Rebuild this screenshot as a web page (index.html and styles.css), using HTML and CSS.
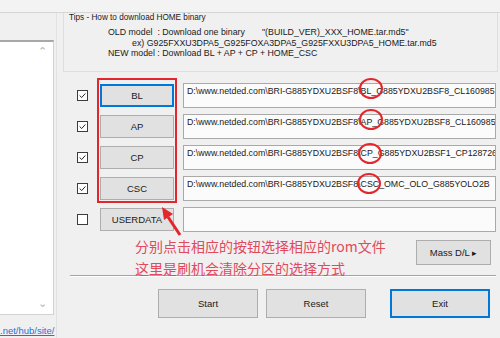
FILE: index.html
```html
<!DOCTYPE html>
<html>
  <head>
    <meta charset="utf-8" />
    <title>Odin</title>
    <link rel="stylesheet" href="styles.css">
  </head>
  <body>
    <div class="window">
      <div class="topstrip"></div>
      <div class="layout">
        <aside class="side">
          <div class="listbox">
            <span class="listbox__arrow">&#8963;</span>
            <span class="listbox__arrow">&#8964;</span>
          </div>
          <a class="side__link">.net/hub/site/</a>
        </aside>

        <main class="main">
          <section class="tips">
            <div class="tips__title">Tips - How to download HOME binary</div>
            <div class="tips__line tips__line--model"><span class="tips__label">OLD model  : Download one binary</span>"(BUILD_VER)_XXX_HOME.tar.md5"</div>
            <div class="tips__line tips__line--ex">ex) G925FXXU3DPA5_G925FOXA3DPA5_G925FXXU3DPA5_HOME.tar.md5</div>
            <div class="tips__line tips__line--model">NEW model : Download BL + AP + CP + HOME_CSC</div>
          </section>

          <div class="files">
            <div class="file-row">
              <span class="check check--on"><svg viewBox="0 0 11 11"><polyline points="2,5.5 4.5,8 9,3" /></svg></span>
              <button class="btn btn--file btn--focus">BL</button>
              <div class="field">D:\www.netded.com\BRI-G885YDXU2BSF8\BL_G885YDXU2BSF8_CL160985</div>
            </div>
            <div class="file-row">
              <span class="check check--on"><svg viewBox="0 0 11 11"><polyline points="2,5.5 4.5,8 9,3" /></svg></span>
              <button class="btn btn--file">AP</button>
              <div class="field">D:\www.netded.com\BRI-G885YDXU2BSF8\AP_G885YDXU2BSF8_CL160985</div>
            </div>
            <div class="file-row">
              <span class="check check--on"><svg viewBox="0 0 11 11"><polyline points="2,5.5 4.5,8 9,3" /></svg></span>
              <button class="btn btn--file">CP</button>
              <div class="field">D:\www.netded.com\BRI-G885YDXU2BSF8\CP_G885YDXU2BSF1_CP128726</div>
            </div>
            <div class="file-row">
              <span class="check check--on"><svg viewBox="0 0 11 11"><polyline points="2,5.5 4.5,8 9,3" /></svg></span>
              <button class="btn btn--file">CSC</button>
              <div class="field">D:\www.netded.com\BRI-G885YDXU2BSF8\CSC_OMC_OLO_G885YOLO2B</div>
            </div>
            <div class="file-row">
              <span class="check"></span>
              <button class="btn btn--file">USERDATA</button>
              <div class="field"></div>
            </div>
          </div>

          <div class="note-row">
            <p class="note">分别点击相应的按钮选择相应的rom文件<br>这里是刷机会清除分区的选择方式</p>
            <button class="btn btn--mass">Mass D/L <span class="btn__tri">&#9656;</span></button>
          </div>

          <hr class="separator">

          <div class="actions">
            <button class="btn btn--action">Start</button>
            <button class="btn btn--action">Reset</button>
            <button class="btn btn--action btn--exit btn--focus">Exit</button>
          </div>
        </main>
      </div>

      <!-- red annotations drawn over the screenshot -->
      <div class="mark-box"></div>
      <span class="mark-ring mark-ring--bl"></span>
      <span class="mark-ring mark-ring--ap"></span>
      <span class="mark-ring mark-ring--cp"></span>
      <span class="mark-ring mark-ring--csc"></span>
      <svg class="mark-arrow" viewBox="0 0 24 32">
        <line x1="20" y1="30" x2="8" y2="12" />
        <polygon points="2,2 13,9 4,15" />
      </svg>
    </div>
  </body>
</html>
```

FILE: styles.css
```css
body {
  --color-bg: #f0f0f0;
  --color-line: #d6d6d6;
  --color-button: #e1e1e1;
  --color-button-border: #adadad;
  --color-focus: #0078d7;
  --color-mark: #e3262c;
  --color-note: #e2495a;

  margin: 0;
  background: var(--color-bg);
  font-family: "Liberation Sans", Arial, sans-serif;
  font-size: 8.8px;
  color: #1a1a1a;
}

.window {
  position: relative;
  width: 500px;
  height: 338px;
  overflow: hidden;
}

.topstrip {
  height: 12px;
  border-bottom: 1px solid var(--color-line);
  background: #f3f3f3;
}

.layout {
  display: flex;
  height: 325px;
}

/* left list panel */
.side {
  width: 57px;
  flex: none;
  padding-top: 27px;
  box-sizing: border-box;
  border-right: 1px solid #e2e2e2;
}

.listbox {
  height: 275px;
  margin-right: 2px;
  box-sizing: border-box;
  background: #ffffff;
  border: 1px solid #d2d2d2;
  border-top: 2px solid #a8a8a8;
  border-left: none;
  display: flex;
  flex-direction: column;
  align-items: flex-end;
  justify-content: space-between;
  padding: 4px 6px 6px 0;
}

.listbox__arrow {
  color: #b5b5b5;
  font-size: 11px;
  line-height: 10px;
}

.side__link {
  display: block;
  margin-top: 10px;
  font-size: 9.5px;
  color: #2b6fd4;
  text-decoration: underline;
}

/* main area */
.main {
  flex: 1;
  padding: 0 3px 0 6px;
}

.tips {
  height: 59px;
  box-sizing: border-box;
  border: 1px solid #dedede;
  border-top: none;
  padding-left: 5px;
}

.tips__title {
  font-size: 8.2px;
  line-height: 10px;
  margin-bottom: 4px;
}

.tips__line {
  line-height: 10.7px;
  white-space: pre;
}

.tips__label {
  display: inline-block;
  width: 154px;
}

.tips__line--model {
  padding-left: 39px;
}

.tips__line--ex {
  padding-left: 63px;
}

.files {
  margin-top: 8px;
}

.file-row {
  display: flex;
  align-items: center;
  height: 31px;
  padding-left: 14px;
}

.check {
  width: 11px;
  height: 11px;
  flex: none;
  box-sizing: border-box;
  border: 1px solid #3c3c3c;
  background: #ffffff;
  margin-right: 12px;
}

.check svg {
  display: block;
  width: 9px;
  height: 9px;
  fill: none;
  stroke: #222222;
  stroke-width: 1.2;
}

.btn {
  font: inherit;
  font-size: 9.5px;
  color: #1a1a1a;
  background: var(--color-button);
  border: 1px solid var(--color-button-border);
  padding: 0;
}

.btn--focus {
  border: 2px solid var(--color-focus);
}

.btn--file {
  width: 74px;
  height: 23px;
  flex: none;
  margin-right: 9px;
}

.field {
  width: 313px;
  height: 25px;
  flex: none;
  box-sizing: border-box;
  border: 1px solid #a9a9a9;
  background: #fbfbfb;
  padding: 2px 3px 0;
  white-space: nowrap;
  overflow: hidden;
}

.note-row {
  display: flex;
  justify-content: space-between;
  height: 40px;
}

.note {
  margin: 0 0 0 72px;
  font-family: "Noto Sans CJK SC", "Liberation Serif", serif;
  font-size: 14px;
  line-height: 22px;
  color: var(--color-note);
}

.btn--mass {
  width: 75px;
  height: 25px;
  margin: 5px 7px 0 0;
}

.btn__tri {
  font-size: 9px;
}

.separator {
  margin: 0 2px 0 7px;
  border: none;
  border-top: 1px solid #a4a4a4;
  border-bottom: 1px solid #ffffff;
}

.actions {
  display: flex;
  margin: 12px 0 0 95px;
}

.btn--action {
  width: 100px;
  height: 29px;
  margin-right: 8px;
}

.btn--exit {
  margin-left: 16px;
}

/* annotations */
.mark-box {
  position: absolute;
  left: 97px;
  top: 78px;
  width: 80px;
  height: 125px;
  box-sizing: border-box;
  border: 2px solid var(--color-mark);
}

.mark-ring {
  position: absolute;
  width: 24px;
  height: 21px;
  box-sizing: border-box;
  border: 2px solid var(--color-mark);
  border-radius: 50%;
}

.mark-ring--bl {
  left: 359px;
  top: 78px;
}

.mark-ring--ap {
  left: 359px;
  top: 109px;
}

.mark-ring--cp {
  left: 358px;
  top: 143px;
}

.mark-ring--csc {
  left: 357px;
  top: 173px;
}

.mark-arrow {
  position: absolute;
  left: 160px;
  top: 205px;
  width: 24px;
  height: 32px;
}

.mark-arrow line {
  stroke: var(--color-mark);
  stroke-width: 3;
}

.mark-arrow polygon {
  fill: var(--color-mark);
}
```
